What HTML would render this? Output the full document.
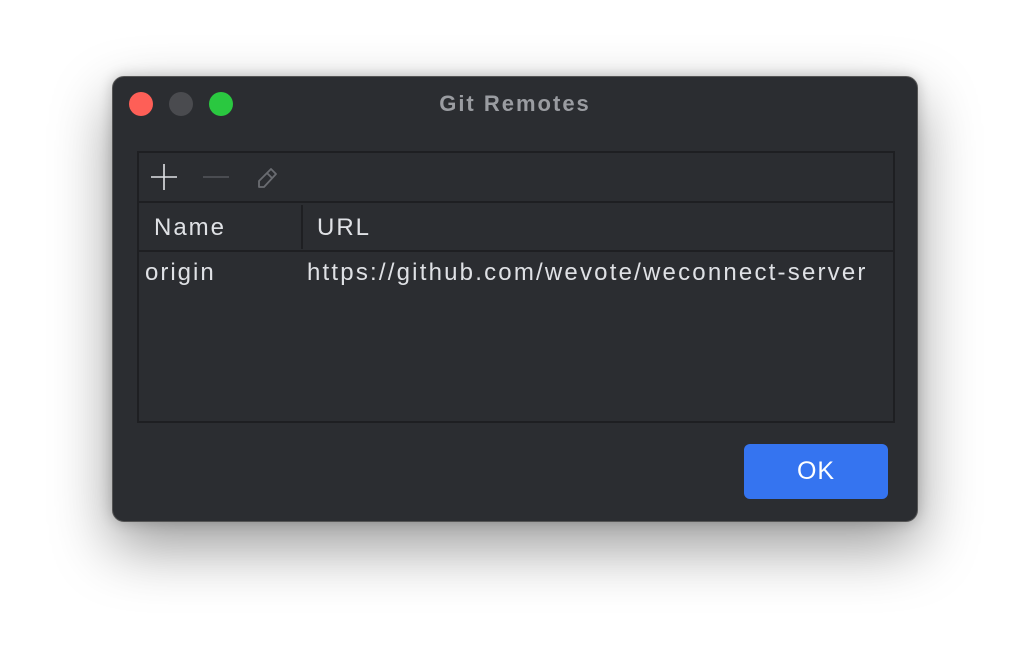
<!DOCTYPE html><html><head><style>
body{margin:0;width:1030px;height:670px;background:#fff;position:relative;overflow:hidden;font-family:"Liberation Sans",sans-serif}
.win{position:absolute;left:112px;top:76px;width:804px;height:444px;background:#2b2d31;border:1px solid #555;border-radius:12px;box-shadow:0 25px 60px rgba(0,0,0,.4),0 0 14px rgba(0,0,0,.2)}
.dot{position:absolute;top:15px;width:24px;height:24px;border-radius:50%}
.title{position:absolute;top:14px;left:0;right:0;text-align:center;color:#9a9ca1;font-weight:bold;font-size:22px;letter-spacing:2px}
.tbl{position:absolute;left:24px;top:74px;width:754px;height:268px;border:2px solid #1e1f22}
.tb{height:48px;border-bottom:2px solid #1e1f22;position:relative}
.hd{height:47px;border-bottom:2px solid #1e1f22;position:relative;color:#dfe1e5;font-size:24px;letter-spacing:2px}
.ok{position:absolute;left:631px;top:367px;width:144px;height:55px;background:#3574f0;border-radius:6px;color:#fff;font-size:25px;text-align:center;line-height:55px;letter-spacing:1px}
</style></head><body>
<div class="win">
<div class="dot" style="left:16px;background:#fe5f57"></div>
<div class="dot" style="left:56px;background:#4a4b4f"></div>
<div class="dot" style="left:96px;background:#2ac840"></div>
<div class="title">Git Remotes</div>
<div class="tbl">
<div class="tb"><svg width="160" height="48" style="position:absolute;left:0;top:0">
<path d="M25 11v26M12 24h26" stroke="#dfe1e5" stroke-width="1.6"/>
<path d="M64 24h26" stroke="#55575c" stroke-width="1.6"/>
<path d="M120 34v-6l12-12 5 5-12 13z M128 20l5 5" stroke="#6a6c71" stroke-width="1.8" fill="none" stroke-linejoin="round"/>
</svg></div>
<div class="hd"><span style="position:absolute;left:15px;top:11px">Name</span><div style="position:absolute;left:162px;top:2px;width:2px;height:44px;background:#1e1f22"></div><span style="position:absolute;left:178px;top:11px">URL</span></div>
<div style="position:relative;color:#dfe1e5;font-size:24px;letter-spacing:2px;height:40px"><span style="position:absolute;left:6px;top:7px">origin</span><span style="position:absolute;left:168px;top:7px;letter-spacing:2.2px">https://github.com/wevote/weconnect-server</span></div>
</div>
<div class="ok">OK</div>
</div>
</body></html>
